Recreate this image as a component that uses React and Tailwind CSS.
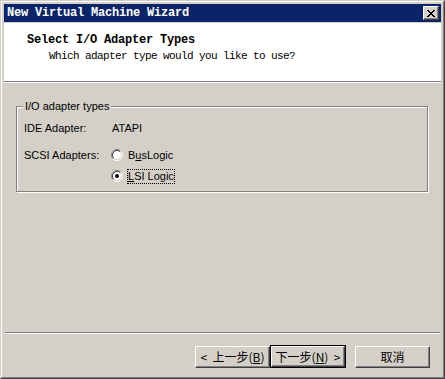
import React from "react";

const sans = { fontFamily: '"Liberation Sans", Arial, sans-serif' };
const mono = { fontFamily: '"Liberation Mono", "Noto Sans CJK SC", monospace' };
const cjk = { fontFamily: '"Noto Sans CJK SC", "Liberation Sans", sans-serif' };

function CloseX() {
  const rects = [];
  for (let i = 0; i < 7; i++) {
    rects.push(<rect key={"a" + i} x={i} y={i} width={2} height={1} fill="#000" />);
    rects.push(<rect key={"b" + i} x={6 - i} y={i} width={2} height={1} fill="#000" />);
  }
  return (
    <svg width="8" height="7" viewBox="0 0 8 7" shapeRendering="crispEdges">
      {rects}
    </svg>
  );
}

function Radio({ checked }) {
  return (
    <svg width="12" height="12" viewBox="0 0 12 12" className="shrink-0">
      <circle cx="6" cy="6" r="5" fill="#fff" />
      <path d="M2.11 9.89 A5.5 5.5 0 0 1 9.89 2.11" stroke="#808080" strokeWidth="1" fill="none" />
      <path d="M9.89 2.11 A5.5 5.5 0 0 1 2.11 9.89" stroke="#ffffff" strokeWidth="1" fill="none" />
      <path d="M2.82 9.18 A4.5 4.5 0 0 1 9.18 2.82" stroke="#404040" strokeWidth="1" fill="none" />
      <path d="M9.18 2.82 A4.5 4.5 0 0 1 2.82 9.18" stroke="#d4d0c8" strokeWidth="1" fill="none" />
      {checked && <circle cx="6" cy="6" r="2" fill="#000" />}
    </svg>
  );
}

function Button({ children, focused, width }) {
  const inner = (
    <div
      className={`h-full flex items-center justify-center border border-t-white border-l-white border-r-[#404040] border-b-[#404040] shadow-[inset_-1px_-1px_0_#808080] bg-[#d4d0c8] text-[12px] text-black leading-none`}
      style={cjk}
    >
      {children}
    </div>
  );
  if (focused) {
    return (
      <div className="h-[23px] border border-black" style={{ width }}>
        {inner}
      </div>
    );
  }
  return (
    <div className="h-[22px]" style={{ width }}>
      {inner}
    </div>
  );
}

export default function App() {
  return (
    <div className="w-[445px] h-[379px] bg-[#d4d0c8] border border-t-[#d4d0c8] border-l-[#d4d0c8] border-r-[#404040] border-b-[#404040]">
      <div className="h-full border border-t-white border-l-white border-r-[#808080] border-b-[#808080] p-[2px] flex flex-col">
        {/* Title bar */}
        <div className="h-[18px] bg-[#0a246a] flex items-center justify-between pl-[3px] pr-[2px] shrink-0">
          <span className="text-white font-bold text-[12px] leading-none tracking-[-0.2px] whitespace-pre" style={mono}>
            New Virtual Machine Wizard
          </span>
          <div className="w-[16px] h-[14px] bg-[#d4d0c8] border border-t-white border-l-white border-r-[#404040] border-b-[#404040] shadow-[inset_-1px_-1px_0_#808080] flex items-center justify-center">
            <CloseX />
          </div>
        </div>

        {/* Client */}
        <div className="mt-[1px] flex-1 flex flex-col">
          <div className="h-[58px] bg-white pl-[23px] pt-[11px] shrink-0">
            <div className="font-bold text-[12px] leading-[12px] tracking-[-0.2px] text-black whitespace-pre" style={mono}>
              Select I/O Adapter Types
            </div>
            <div className="mt-[4px] ml-[22px] text-[11px] leading-[12px] tracking-[-0.6px] text-black whitespace-pre" style={mono}>
              Which adapter type would you like to use?
            </div>
          </div>
          <div className="h-[2px] border-t border-t-[#808080] border-b border-b-white shrink-0" />

          <div className="flex-1 flex flex-col text-[11px] text-black" style={sans}>
            {/* Group box */}
            <div className="relative mt-[23px] ml-[12px] w-[412px] h-[86px] border border-[#808080] shadow-[1px_1px_0_#fff,inset_1px_1px_0_#fff] pl-[7px] pt-[11px]">
              <span className="absolute top-[-7px] left-[6px] px-[2px] bg-[#d4d0c8] leading-[13px] whitespace-pre">
                I/O adapter types
              </span>
              <div className="h-[20px] flex items-center">
                <span className="w-[88px]">IDE Adapter:</span>
                <span>ATAPI</span>
              </div>
              <div className="h-[20px] mt-[7px] flex items-center">
                <span className="w-[87px]">SCSI Adapters:</span>
                <Radio checked={false} />
                <span className="ml-[4px] border border-transparent leading-[13px]">
                  B<span className="underline underline-offset-1">u</span>sLogic
                </span>
              </div>
              <div className="h-[20px] mt-[1px] flex items-center">
                <span className="w-[87px]" />
                <Radio checked={true} />
                <span className="ml-[4px] border border-dotted border-black leading-[13px]">
                  <span className="underline underline-offset-1">L</span>SI Logic
                </span>
              </div>
            </div>

            {/* bottom separator */}
            <div className="mt-auto mx-[1px] h-[2px] border-t border-t-[#808080] border-b border-b-white shrink-0" />

            {/* Buttons */}
            <div className="mt-[11px] mb-[7px] flex items-center pl-[191px]">
              <Button width={75}>
                <span className="whitespace-pre">{"<  上一步("}<span className="underline">B</span>{")"}</span>
              </Button>
              <Button width={76} focused>
                <span className="whitespace-pre">{"下一步("}<span className="underline">N</span>{")  >"}</span>
              </Button>
              <div className="ml-[9px]">
                <Button width={75}>取消</Button>
              </div>
            </div>
          </div>
        </div>
      </div>
    </div>
  );
}
